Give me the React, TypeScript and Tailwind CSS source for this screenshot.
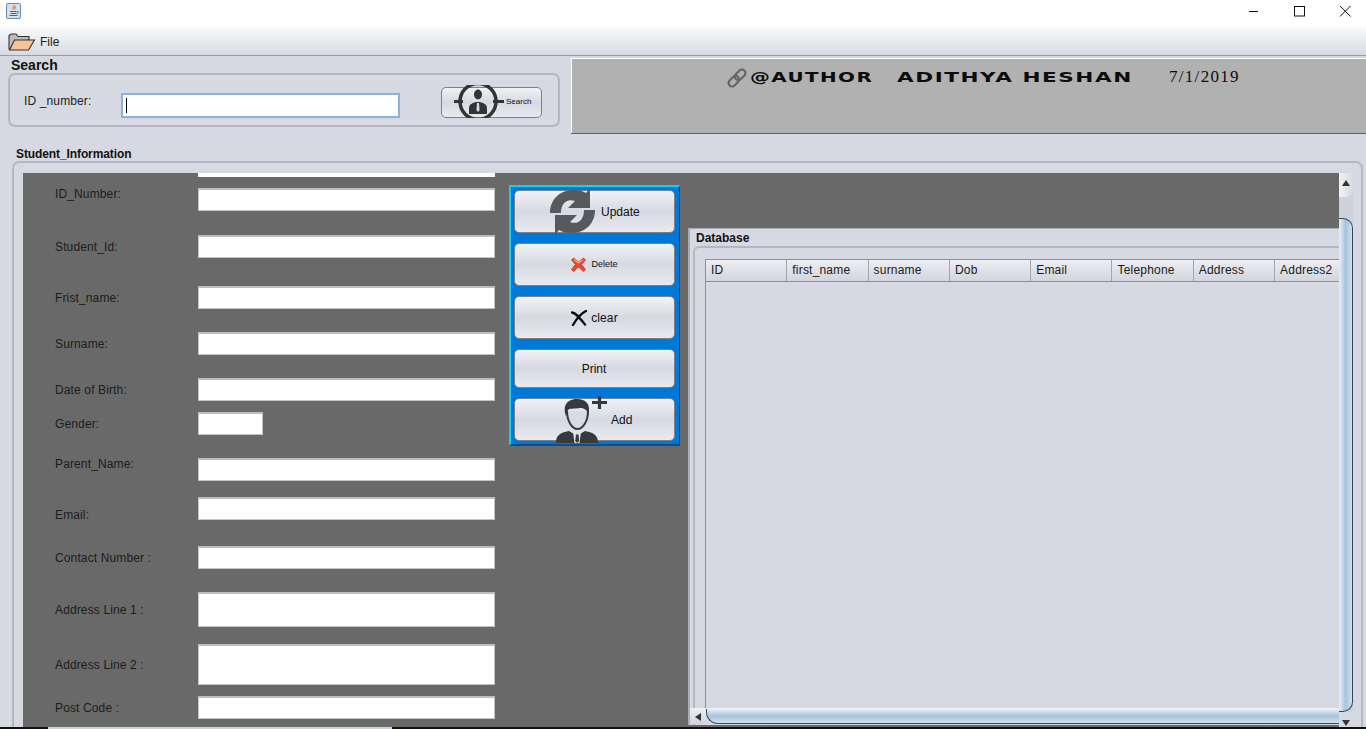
import React from "react";

const btn = "relative flex items-center rounded-[5px] border border-[#7b808c] bg-linear-to-b from-[#f1f2f5] via-[#d6d9e2] to-[#e8eaef] text-[12px] text-[#111]";
const input = "block w-[297px] shrink-0 bg-white border border-[#c4c4c4] border-t-2 border-t-[#bdbdbd]";
const label = "w-[144px] pl-[1px] pt-[1px] shrink-0 text-[12px] leading-[14px] tracking-[0.13px] text-[#1c1c1c]";

function Row({ rowCls, labelCls, text, inputCls }: { rowCls: string; labelCls: string; text: string; inputCls: string }) {
  return (
    <div className={"flex " + rowCls}>
      <div className={label + " " + labelCls}>{text}</div>
      <div className={inputCls} />
    </div>
  );
}

function JavaIcon() {
  return (
    <svg width="15" height="16" viewBox="0 0 15 16">
      <rect x="0.500" y="0.500" width="14" height="15" rx="1.500" fill="#d5e0ee" stroke="#6f88a8" />
      <path d="M8 2c1 1.500-2 2.500-1 4.500M9.500 3.500c.5 1-1.500 1.500-.5 3" stroke="#e0701c" fill="none" strokeWidth="1.100" />
      <path d="M4 8.500h6.500M4.500 10.500h5.500M3.500 12.500h8M11 8.500c2-.5 2 2-.5 2" stroke="#2f66a6" fill="none" strokeWidth="1" />
    </svg>
  );
}

function FolderIcon() {
  return (
    <svg width="28" height="18" viewBox="0 0 28 18">
      <path d="M1 16V2.500L3 1h5l2 2.500h11V7L5 16z" fill="#bcbcbc" stroke="#333" strokeWidth="1.100" />
      <path d="M1.500 17l5-10h20l-6 10z" fill="#f7c595" stroke="#333" strokeWidth="1.100" />
    </svg>
  );
}

function TargetIcon() {
  return (
    <svg width="50" height="33" viewBox="0 0 50 33">
      <circle cx="24" cy="16.500" r="18" fill="none" stroke="#333338" strokeWidth="3.500" />
      <path d="M0 15h9v3H0zM39 15h11v3H39z" fill="#333338" />
      <ellipse cx="24" cy="9.500" rx="4" ry="5" fill="#333338" />
      <path d="M15 29v-6c0-4 4-5 7-6h4c3 1 7 2 7 6v6z" fill="#333338" />
      <path d="M23 18h2l.6 7-1.600 2-1.600-2z" fill="#d6d9e2" />
    </svg>
  );
}

function LinkIcon() {
  return (
    <svg width="22" height="22" viewBox="0 0 22 22" className="shrink-0">
      <g fill="none" stroke="#666" strokeWidth="2.200" transform="rotate(-45 11 11)">
        <rect x="0.500" y="7.500" width="12" height="7" rx="3.500" />
        <rect x="9.500" y="7.500" width="12" height="7" rx="3.500" />
      </g>
    </svg>
  );
}

function RefreshIcon() {
  const half = "M1 25C1 12 10 2 25 2c5 0 9 1 12 3l4-5v20H19l7-7c-8-3-14 2-14 12z";
  return (
    <svg width="48" height="48" viewBox="0 0 48 48" className="absolute left-[34px] top-[-3px]">
      <path d={half} fill="#565a5d" />
      <path d={half} fill="#565a5d" transform="rotate(180 23.500 23.500)" />
    </svg>
  );
}

function RedX() {
  return (
    <svg width="15" height="15" viewBox="0 0 15 15" className="shrink-0">
      <path d="M2.500 1L7.500 5 12.500 1 14.500 3 10.500 7.500 14.500 12.500 12.500 14.500 7.500 10 2.500 14.500.5 12.500 4.500 7.500.5 3z" fill="#e8492f" stroke="#c92a1c" strokeWidth="0.700" />
      <path d="M3 2.500l4.500 3.500 4-3" fill="none" stroke="#f7a58f" strokeWidth="1.200" />
    </svg>
  );
}

function BlackX() {
  return (
    <svg width="16" height="16" viewBox="0 0 16 16" className="shrink-0">
      <path d="M1 2.500C5 3 8 7 14 14.500M15 1C11 3 6 8 2 15" fill="none" stroke="#0c0c0c" strokeWidth="2.400" strokeLinecap="round" />
    </svg>
  );
}

function ManIcon() {
  return (
    <svg width="54" height="47" viewBox="0 0 54 47" className="absolute left-[41px] top-[-3px]">
      <path d="M0 47c0-8 4-10 13-12l5 3 3 1 3-1 5-3c9 2 13 4 13 12z" fill="#36393d" />
      <path d="M17 36l4 3 4-3-1.500 11h-5z" fill="#e3e5ea" />
      <path d="M20 38.500h2.500l.7 6.500-2 2-2-2z" fill="#36393d" />
      <path d="M11 15c0 10 5 18 10.500 18S32 25 32 15" fill="#d9dbe2" stroke="#36393d" strokeWidth="2" />
      <path d="M10 20C6 9 12 3 21 3c9 0 14 5 11.500 16C31 14 29 12 24 12c-5 1-11 0-12 2z" fill="#36393d" />
      <path d="M36 6.500h15M43.500 0v13" stroke="#36393d" strokeWidth="3.200" />
    </svg>
  );
}

const cols = ["ID", "first_name", "surname", "Dob", "Email", "Telephone", "Address", "Address2"];

export default function App() {
  return (
    <div className="w-[1366px] h-[729px] overflow-hidden flex flex-col bg-[#d6d9e2] font-['Liberation_Sans',Arial,sans-serif]">
      {/* title bar */}
      <div className="h-[27px] shrink-0 bg-white flex items-start justify-between pl-[6px]">
        <div className="pt-[3px]"><JavaIcon /></div>
        <svg width="138" height="27" viewBox="0 0 138 27" fill="none" stroke="#111" strokeWidth="1">
          <path d="M21 11.500h9" />
          <rect x="66.500" y="6.500" width="10" height="9.500" />
          <path d="M112 6l10.500 10.500M122.500 6L112 16.500" />
        </svg>
      </div>
      {/* menu bar */}
      <div className="h-[29px] shrink-0 flex items-center gap-[4px] pl-[8px] pt-[2px] border-b border-[#9a9da6] bg-linear-to-b from-[#fafafb] to-[#d8dbe3] text-[12px] text-[#222]">
        <FolderIcon />
        <span>File</span>
      </div>
      {/* top */}
      <div className="h-[90px] shrink-0 flex">
        <div className="w-[571px] shrink-0 pl-[8px]">
          <div className="h-[17px] pl-[3px] pt-[1px] text-[14px] leading-[16px] font-bold text-[#111]">Search</div>
          <div className="w-[552px] h-[54px] rounded-[7px] border-2 border-[#b3b7c2] flex items-start">
            <div className="w-[112px] pl-[14px] pt-[19px] shrink-0 text-[12px] leading-[14px] tracking-[0.13px] text-[#222]">ID _number:</div>
            <div className="-ml-[1px] mt-[18px] w-[279px] h-[25px] shrink-0 bg-white border-2 border-[#8db2d6] flex items-center pl-[3px]">
              <div className="w-px h-[15px] bg-black" />
            </div>
            <div className={btn + " mt-[12px] ml-[41px] w-[101px] h-[31px]"}>
              <div className="absolute left-[12px] top-[-3px] flex"><TargetIcon /></div>
              <span className="absolute left-[64px] top-[9px] text-[8px] leading-[10px]">Search</span>
            </div>
          </div>
        </div>
        <div className="flex-1 mt-[2px] h-[75px] bg-[#b1b1b1] border-l border-t border-white shadow-[0_1px_0_#5f5f5f] flex items-start pt-[8px] pl-[154px] text-[#0c0c0c]">
          <LinkIcon />
          <span className="ml-[2px] mt-[3px] w-[147px] shrink-0 origin-left scale-x-[1.42] text-[14px] leading-[15px] font-bold tracking-[1px] font-['DejaVu_Sans',sans-serif] whitespace-nowrap">@AUTHOR</span>
          <span className="mt-[3px] w-[272px] shrink-0 origin-left scale-x-[1.54] text-[14px] leading-[15px] font-bold tracking-[1px] font-['DejaVu_Sans',sans-serif] whitespace-nowrap">ADITHYA HESHAN</span>
          <span className="mt-[1px] text-[17px] leading-[17px] tracking-[1.300px] font-['Liberation_Serif',serif] whitespace-nowrap">7/1/2019</span>
        </div>
      </div>
      {/* student information */}
      <div className="h-[15px] shrink-0 pl-[16px] pt-[1px] text-[12px] leading-[14px] font-bold tracking-[-0.1px] text-[#111]">Student_Information</div>
      <div className="ml-[12px] mr-[3px] h-[566px] shrink-0 rounded-t-[7px] border-2 border-b-0 border-[#b3b7c2] pt-[10px] pl-[9px] overflow-hidden flex">
        {/* gray viewport */}
        <div className="w-[1316px] h-[554px] shrink-0 bg-[#696969] flex overflow-hidden">
          {/* form */}
          <div className="w-[486px] shrink-0 pl-[31px]">
            <div className="flex h-[4px]">
              <div className="w-[144px] shrink-0" />
              <div className="w-[297px] h-[4px] bg-white" />
            </div>
            <Row rowCls="h-[23px] mt-[11px]" labelCls="-mt-[2px]" text="ID_Number:" inputCls={input + " h-[23px]"} />
            <Row rowCls="h-[23px] mt-[24px]" labelCls="mt-[4px]" text="Student_Id:" inputCls={input + " h-[23px]"} />
            <Row rowCls="h-[23px] mt-[28px]" labelCls="mt-[4px]" text="Frist_name:" inputCls={input + " h-[23px]"} />
            <Row rowCls="h-[23px] mt-[23px]" labelCls="mt-[4px]" text="Surname:" inputCls={input + " h-[23px]"} />
            <Row rowCls="h-[23px] mt-[23px]" labelCls="mt-[4px]" text="Date of Birth:" inputCls={input + " h-[23px]"} />
            <Row rowCls="h-[23px] mt-[11px]" labelCls="mt-[4px]" text="Gender:" inputCls={input + " !w-[65px] h-[23px]"} />
            <Row rowCls="h-[23px] mt-[23px]" labelCls="-mt-[2px]" text="Parent_Name:" inputCls={input + " h-[23px]"} />
            <Row rowCls="h-[23px] mt-[16px]" labelCls="mt-[10px]" text="Email:" inputCls={input + " h-[23px]"} />
            <Row rowCls="h-[23px] mt-[26px]" labelCls="mt-[4px]" text="Contact Number :" inputCls={input + " h-[23px]"} />
            <Row rowCls="h-[35px] mt-[23px]" labelCls="mt-[10px]" text="Address Line 1 :" inputCls={input + " h-[35px]"} />
            <Row rowCls="h-[41px] mt-[17px]" labelCls="mt-[13px]" text="Address Line 2 :" inputCls={input + " h-[41px]"} />
            <Row rowCls="h-[23px] mt-[11px]" labelCls="mt-[4px]" text="Post Code :" inputCls={input + " h-[23px]"} />
          </div>
          {/* button column */}
          <div className="w-[171px] h-[261px] mt-[12px] shrink-0 bg-[#0078d7] border border-t-2 border-l-2 border-[#10d0f5] border-r-[#0a4f8c] border-b-2 border-b-[#0a4f8c] pl-[3px] pt-[3px]">
            <div className={btn + " w-[161px] h-[43px]"}>
              <RefreshIcon />
              <span className="absolute left-[86px] top-[12px]">Update</span>
            </div>
            <div className={btn + " w-[161px] h-[43px] mt-[10px] justify-center gap-[5px]"}>
              <RedX /><span className="text-[9px]">Delete</span>
            </div>
            <div className={btn + " w-[161px] h-[43px] mt-[10px] justify-center gap-[4px]"}>
              <BlackX /><span className="tracking-[0.1px]">clear</span>
            </div>
            <div className={btn + " w-[161px] h-[39px] mt-[10px] justify-center pr-[1px]"}>
              <span>Print</span>
            </div>
            <div className={btn + " w-[161px] h-[43px] mt-[10px]"}>
              <ManIcon />
              <span className="absolute left-[96px] top-[12px]">Add</span>
            </div>
          </div>
          {/* database */}
          <div className="ml-[8px] mt-[55px] w-[651px] h-[497px] shrink-0 bg-[#d6d9e2] border-l-2 border-t border-[#a9adb8] relative overflow-hidden">
            <div className="h-[17px] pl-[6px] pt-[2px] text-[12px] leading-[14px] font-bold text-[#111]">Database</div>
            <div className="ml-[3px] h-[480px] rounded-tl-[6px] border-l-2 border-t-2 border-[#b3b7c2] pt-[11px] pl-[10px]">
              <div className="h-[453px] w-[700px] border-l border-[#8b8f9a]">
                <div className="flex h-[23px] border-t border-b border-[#8b8f9a] bg-linear-to-b from-[#eceef2] to-[#d2d5dd]">
                  {cols.map((c) => (
                    <div key={c} className="w-[81.300px] shrink-0 border-r border-[#a2a6b1] pl-[5px] text-[12px] leading-[21px] tracking-[0.2px] text-[#1a1a1a]">{c}</div>
                  ))}
                </div>
              </div>
            </div>
            {/* horizontal scrollbar */}
            <div className="absolute left-0 bottom-[1px] w-full h-[16px] flex bg-[#d6d9e2] border-t border-[#eef0f4]">
              <div className="w-[16px] shrink-0 flex items-center pl-[5px] bg-linear-to-b from-[#eceef2] to-[#cfd2da]">
                <div className="w-0 h-0 border-y-[4px] border-y-transparent border-r-[6px] border-r-[#333]" />
              </div>
              <div className="flex-1 rounded-bl-[12px] border-l border-b border-[#33465c] bg-linear-to-b from-[#e8f0f7] via-[#a9c3dc] to-[#cfe1ef]" />
            </div>
          </div>
        </div>
        {/* vertical scrollbar */}
        <div className="w-[14px] h-[554px] shrink-0 bg-[#cfd2da] flex flex-col">
          <div className="h-[24px] shrink-0 rounded-br-[8px] bg-linear-to-r from-[#f2f3f6] to-[#d6d9e2] flex justify-center pt-[7px]">
            <div className="w-0 h-0 border-x-[4px] border-x-transparent border-b-[6px] border-b-[#333]" />
          </div>
          <div className="h-[21px] shrink-0" />
          <div className="h-[494px] shrink-0 rounded-tr-[10px] rounded-br-[10px] border-r border-t border-b border-[#33465c] bg-linear-to-r from-[#e8f0f7] via-[#a9c3dc] to-[#cfe1ef]" />
          <div className="flex-1 flex justify-center items-end pb-[1px] bg-[#d6d9e2]">
            <div className="w-0 h-0 border-x-[4px] border-x-transparent border-t-[6px] border-t-[#333]" />
          </div>
        </div>
      </div>
      {/* peek of the desktop below the window */}
      <div className="h-[2px] shrink-0 flex bg-[#111]">
        <div className="w-[48px] shrink-0" />
        <div className="w-[344px] shrink-0 bg-[#cfd2da]" />
      </div>
    </div>
  );
}
